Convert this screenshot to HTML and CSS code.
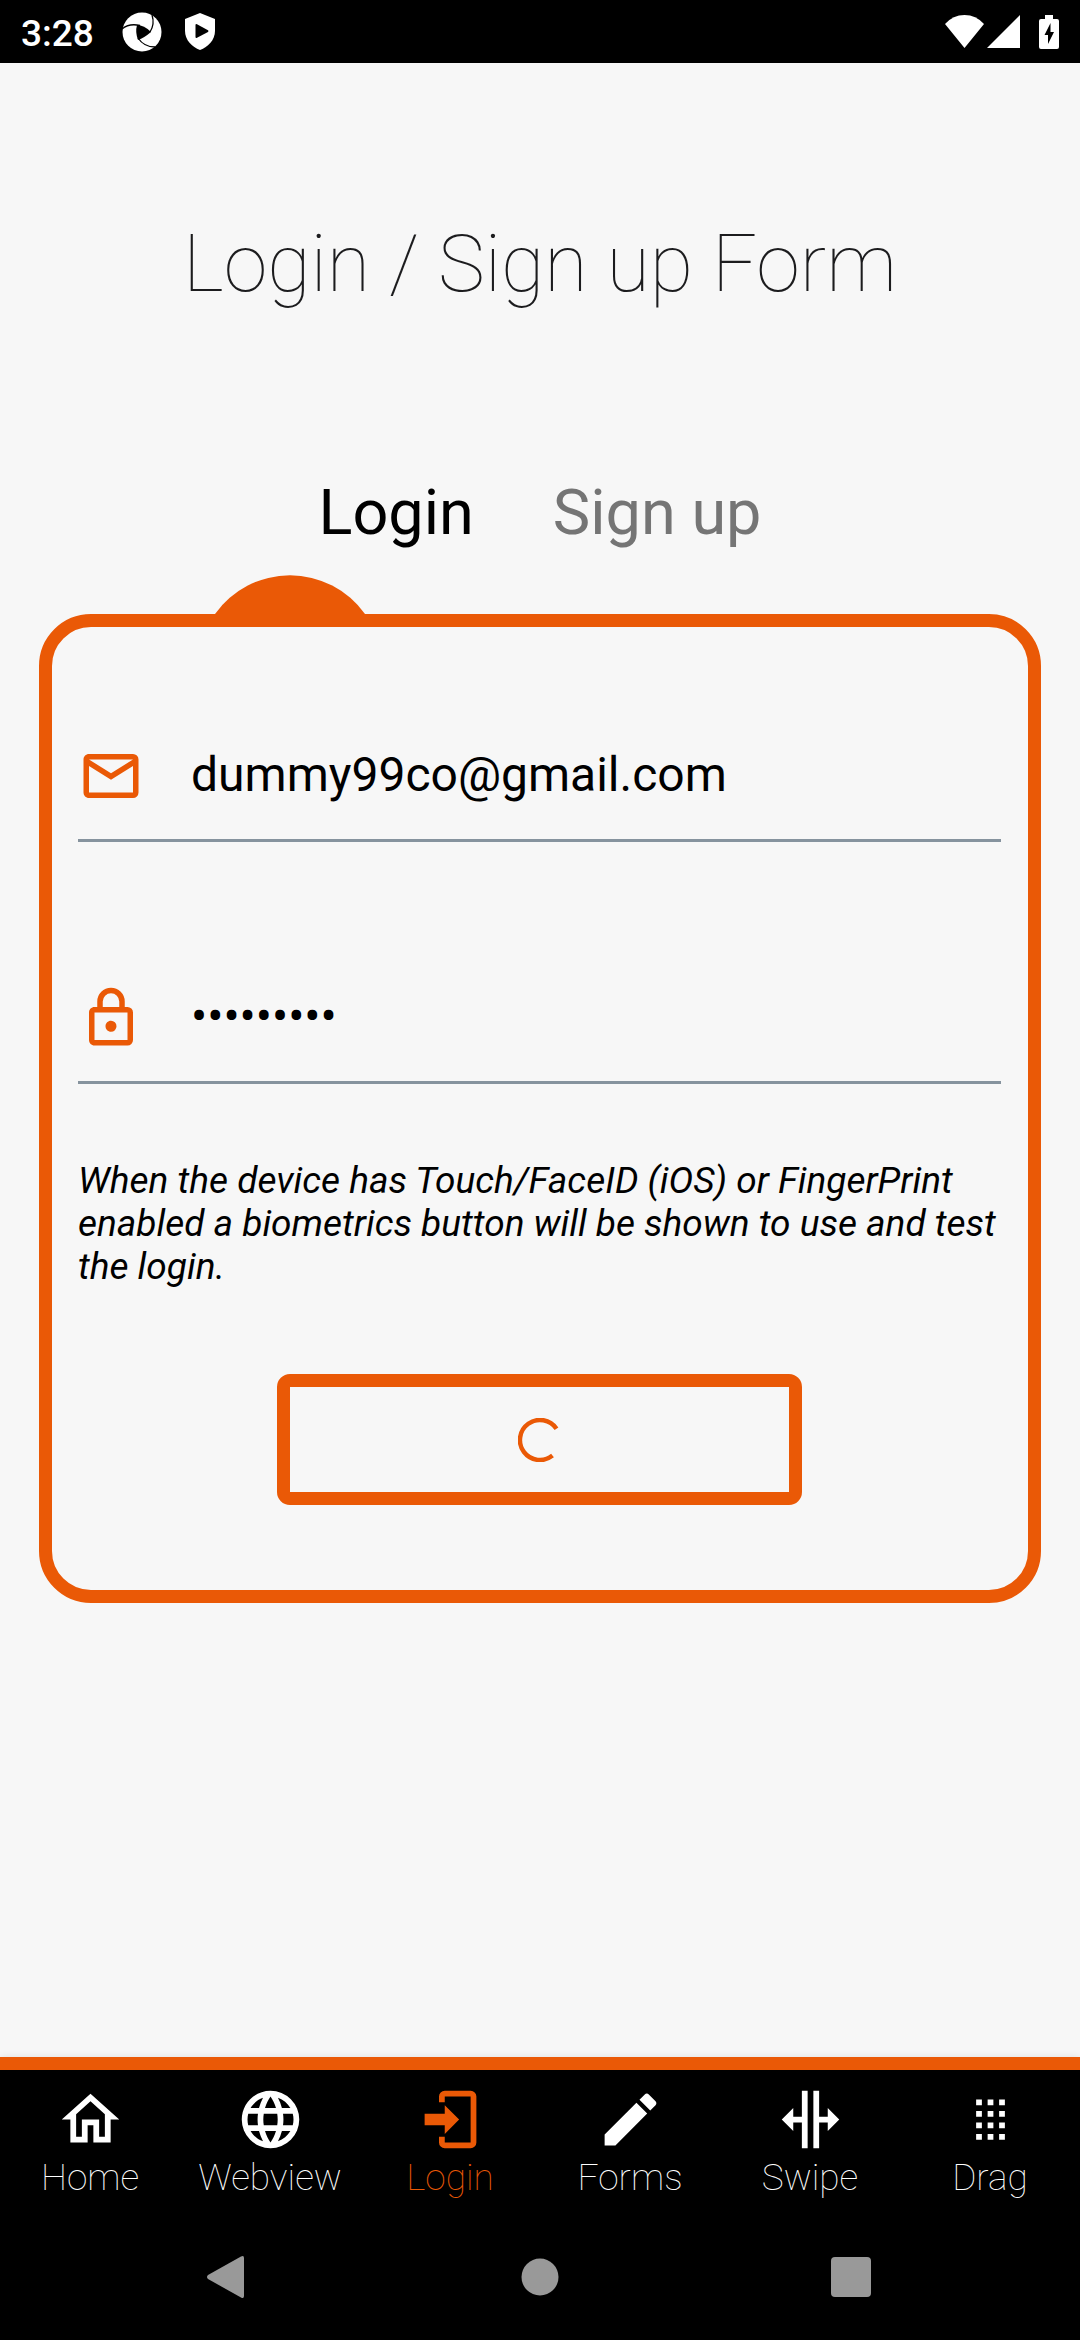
FILE: index.html
```html
<!DOCTYPE html>
<html lang="en">
<head>
<meta charset="utf-8">
<meta name="viewport" content="width=device-width, initial-scale=1">
<title>Login / Sign up Form</title>
<link rel="stylesheet" href="styles.css">
</head>
<body>
<header class="status">
  <span class="clock">3:28</span>
  <svg class="status-app" viewBox="0 0 40 40" width="40" height="40" aria-hidden="true">
    <circle cx="20" cy="20" r="19.5" fill="#fff"/>
    <path d="M15 13 Q22 13 29 20 Q22 26 16 28 Q13 20 15 13Z" fill="#000"/>
    <g fill="none" stroke="#000" stroke-width="1.3"><path d="M0 17 Q7 11 18 13.500"/><path d="M30 3 Q33 12 28 20"/><path d="M16 26 Q22 35 33 35"/></g>
  </svg>
  <svg class="status-shield" viewBox="0 0 30 37" width="30" height="37" aria-hidden="true">
    <path d="M15 0 L30 6 V18 C30 27 23 34 15 37 C7 34 0 27 0 18 V6Z" fill="#fff"/>
    <path d="M10.500 12 V24 Q10.500 25.500 12 24.800 L23 19 Q24 18 23 17.300 L12 11.200 Q10.500 10.500 10.500 12Z" fill="#000"/>
  </svg>
  <svg class="status-wifi" viewBox="0 0 39 33" width="39" height="33" aria-hidden="true"><path d="M0 9 Q8 0 19.500 0 T39 9 L19.500 33Z" fill="#fff"/></svg>
  <svg class="status-signal" viewBox="0 0 33 33" width="33" height="33" aria-hidden="true"><path d="M33 0 V33 H0Z" fill="#fff"/></svg>
  <svg class="status-battery" viewBox="0 0 20 34" width="20" height="34" aria-hidden="true">
    <path d="M6 0 H14 V4 H18 Q20 4 20 6 V32 Q20 34 18 34 H2 Q0 34 0 32 V6 Q0 4 2 4 H6Z" fill="#fff"/>
    <path d="M11.500 8 L5.500 20 H9 V29 L15 17 H11.500Z" fill="#000"/>
  </svg>
</header>

<main class="screen">
  <h1 class="title">Login / Sign up Form</h1>
  <div class="tabs">
    <button class="tab tab-active" type="button">Login</button>
    <button class="tab" type="button">Sign up</button>
  </div>
  <svg class="notch" viewBox="0 0 150 39" width="150" height="39" aria-hidden="true"><path d="M0 39 A92 92 0 0 1 150 39Z" fill="#ea5906"/></svg>
  <form class="card">
    <div class="field">
      <svg class="field-icon" viewBox="0 0 24 24" aria-hidden="true"><path d="M4 4H20A2 2 0 0 1 22 6V18A2 2 0 0 1 20 20H4C2.890 20 2 19.100 2 18V6C2 4.890 2.890 4 4 4M12 11L20 6H4L12 11M4 18H20V8.370L12 13.360L4 8.370V18Z"/></svg>
      <input class="field-input" type="email" aria-label="Email" value="dummy99co@gmail.com">
    </div>
    <div class="field">
      <svg class="field-icon" viewBox="0 0 24 24" aria-hidden="true"><path d="M12 17C10.890 17 10 16.100 10 15C10 13.890 10.890 13 12 13A2 2 0 0 1 14 15A2 2 0 0 1 12 17M18 20V10H6V20H18M18 8A2 2 0 0 1 20 10V20A2 2 0 0 1 18 22H6C4.890 22 4 21.100 4 20V10C4 8.890 4.890 8 6 8H7V6A5 5 0 0 1 12 1A5 5 0 0 1 17 6V8H18M12 3A3 3 0 0 0 9 6V8H15V6A3 3 0 0 0 12 3Z"/></svg>
      <input class="field-input" type="password" aria-label="Password" value="password1">
    </div>
    <p class="note">When the device has Touch/FaceID (iOS) or FingerPrint enabled a biometrics button will be shown to use and test the login.</p>
    <button class="submit" type="button" aria-label="Logging in">
      <svg viewBox="0 0 44 44" width="44" height="44" aria-hidden="true"><path d="M38.500 10.800 A20 20 0 1 0 34.500 37.600" fill="none" stroke="#ea5906" stroke-width="4.500"/></svg>
    </button>
  </form>
</main>

<nav class="tabbar">
  <a class="item" href="#home"><svg class="item-icon" viewBox="0 0 24 24" aria-hidden="true"><path d="M12 5.690L17 10.190V18H15V12H9V18H7V10.190L12 5.690M12 3L2 12H5V20H11V14H13V20H19V12H22"/></svg><span>Home</span></a>
  <a class="item" href="#webview"><svg class="item-icon" viewBox="0 0 24 24" aria-hidden="true"><path d="M16.360 14C16.440 13.340 16.500 12.680 16.500 12C16.500 11.320 16.440 10.660 16.360 10H19.740C19.900 10.640 20 11.310 20 12C20 12.690 19.900 13.360 19.740 14M14.590 19.560C15.190 18.450 15.650 17.250 15.970 16H18.920C17.960 17.650 16.430 18.930 14.590 19.560M14.340 14H9.660C9.560 13.340 9.500 12.680 9.500 12C9.500 11.320 9.560 10.650 9.660 10H14.340C14.430 10.650 14.500 11.320 14.500 12C14.500 12.680 14.430 13.340 14.340 14M12 19.960C11.170 18.760 10.500 17.430 10.090 16H13.910C13.500 17.430 12.830 18.760 12 19.960M8 8H5.080C6.030 6.340 7.570 5.060 9.400 4.440C8.800 5.550 8.350 6.750 8 8M5.080 16H8C8.350 17.250 8.800 18.450 9.400 19.560C7.570 18.930 6.030 17.650 5.080 16M4.260 14C4.100 13.360 4 12.690 4 12C4 11.310 4.100 10.640 4.260 10H7.640C7.560 10.660 7.500 11.320 7.500 12C7.500 12.680 7.560 13.340 7.640 14M12 4.030C12.830 5.230 13.500 6.570 13.910 8H10.090C10.500 6.570 11.170 5.230 12 4.030M18.920 8H15.970C15.650 6.750 15.190 5.550 14.590 4.440C16.430 5.070 17.960 6.340 18.920 8M12 2C6.470 2 2 6.500 2 12A10 10 0 0 0 12 22A10 10 0 0 0 22 12A10 10 0 0 0 12 2Z"/></svg><span>Webview</span></a>
  <a class="item item-active" href="#login" aria-current="page"><svg class="item-icon" viewBox="0 0 24 24" aria-hidden="true"><path d="M10 17V14H3V10H10V7L15 12L10 17M10 2H19A2 2 0 0 1 21 4V20A2 2 0 0 1 19 22H10A2 2 0 0 1 8 20V18H10V20H19V4H10V6H8V4A2 2 0 0 1 10 2Z"/></svg><span>Login</span></a>
  <a class="item" href="#forms"><svg class="item-icon" viewBox="0 0 24 24" aria-hidden="true"><path d="M20.710 7.040C21.100 6.650 21.100 6 20.710 5.630L18.370 3.290C18 2.900 17.350 2.900 16.960 3.290L15.120 5.120L18.870 8.870M3 17.250V21H6.750L17.810 9.930L14.060 6.180L3 17.250Z"/></svg><span>Forms</span></a>
  <a class="item" href="#swipe"><svg class="item-icon" viewBox="0 0 24 24" aria-hidden="true"><path d="M9 11H6V8L2 12L6 16V13H9V22H11V2H9V11M13 2V22H15V13H18V16L22 12L18 8V11H15V2H13Z"/></svg><span>Swipe</span></a>
  <a class="item" href="#drag"><svg class="item-icon" viewBox="0 0 24 24" aria-hidden="true"><path d="M7 19V17H9V19H7M11 19V17H13V19H11M15 19V17H17V19H15M7 15V13H9V15H7M11 15V13H13V15H11M15 15V13H17V15H15M7 11V9H9V11H7M11 11V9H13V11H11M15 11V9H17V11H15M7 7V5H9V7H7M11 7V5H13V7H11M15 7V5H17V7H15Z"/></svg><span>Drag</span></a>
</nav>

<footer class="system">
  <button class="system-key" type="button" aria-label="Back"><svg viewBox="0 0 44 44" width="44" height="44" aria-hidden="true"><path d="M1 20 L34 1.500 Q37 0 37 3 V41 Q37 44 34 42.500 L1 24 Q-1 22 1 20Z"/></svg></button>
  <button class="system-key" type="button" aria-label="Home"><svg viewBox="0 0 44 44" width="44" height="44" aria-hidden="true"><circle cx="22" cy="22" r="18.500"/></svg></button>
  <button class="system-key" type="button" aria-label="Overview"><svg viewBox="0 0 44 44" width="44" height="44" aria-hidden="true"><rect x="2" y="2" width="40" height="40" rx="4"/></svg></button>
</footer>
</body>
</html>
```
FILE: styles.css
```css
* {
  box-sizing: border-box;
}

body {
  margin: 0;
  min-height: 100vh;
  display: flex;
  flex-direction: column;
  background: #f7f7f7;
  color: #000;
  font-family: Roboto, sans-serif;
}

button {
  margin: 0;
  padding: 0;
  border: 0;
  background: none;
  font: inherit;
}

svg {
  display: block;
  flex: none;
}

.status {
  display: flex;
  align-items: center;
  height: 63px;
  padding: 0 21px;
  background: #000;
  color: #fff;
}

.clock {
  padding-top: 3px;
  font-size: 37px;
  line-height: 43px;
  font-weight: 500;
}

.status-app {
  margin-left: 28px;
}

.status-shield {
  margin-left: 23px;
}

.status-wifi {
  margin-left: auto;
}

.status-signal {
  margin-left: 3px;
}

.status-battery {
  margin-left: 19px;
}

.screen {
  flex: 1;
  padding: 155px 39px 39px;
}

.title {
  margin: 0;
  color: #1c1c1e;
  font-size: 79px;
  line-height: 93px;
  font-weight: 100;
  text-align: center;
}

.tabs {
  display: flex;
  justify-content: center;
  gap: 79px;
  margin-top: 165px;
}

.tab {
  color: #757575;
  font-size: 63px;
  line-height: 74px;
}

.tab-active {
  color: #000;
}

.notch {
  margin-top: 25px;
  margin-left: calc(25% - 75px);
}

.card {
  display: flex;
  flex-direction: column;
  padding: 116px 27px 85px 26px;
  border: 13px solid #ea5906;
  border-radius: 52px;
}

.field {
  display: flex;
  align-items: flex-start;
  gap: 47px;
  padding-bottom: 30px;
  border-bottom: 3px solid #86939e;
}

.field + .field {
  margin-top: 143px;
}

.field-icon {
  width: 66px;
  height: 66px;
  fill: #ea5906;
}

.field-input {
  flex: 1;
  min-width: 0;
  height: 63px;
  padding: 0;
  border: 0;
  outline: 0;
  background: none;
  color: #000;
  font-family: inherit;
  font-size: 48px;
}

.note {
  margin: 75px 0 0;
  font-size: 37px;
  line-height: 43px;
  font-style: italic;
}

.submit {
  display: flex;
  align-items: center;
  justify-content: center;
  align-self: center;
  width: 525px;
  max-width: 100%;
  height: 131px;
  margin-top: 86px;
  border: 13px solid #ea5906;
  border-radius: 13px;
}

.tabbar {
  display: flex;
  height: 157px;
  padding-top: 15px;
  border-top: 13px solid #ea5906;
  background: #000;
  box-shadow: 0 0 8px rgba(0, 0, 0, 0.1);
}

.item {
  flex: 1;
  display: flex;
  flex-direction: column;
  align-items: center;
  gap: 2px;
  color: #fff;
  font-size: 37px;
  line-height: 43px;
  font-weight: 100;
  text-decoration: none;
}

.item-active {
  color: #ea5906;
}

.item-icon {
  width: 69px;
  height: 69px;
  fill: currentColor;
}

.system {
  display: flex;
  align-items: center;
  justify-content: space-between;
  height: 126px;
  padding: 0 207px;
  background: #000;
}

.system-key svg {
  fill: #999;
}
```
